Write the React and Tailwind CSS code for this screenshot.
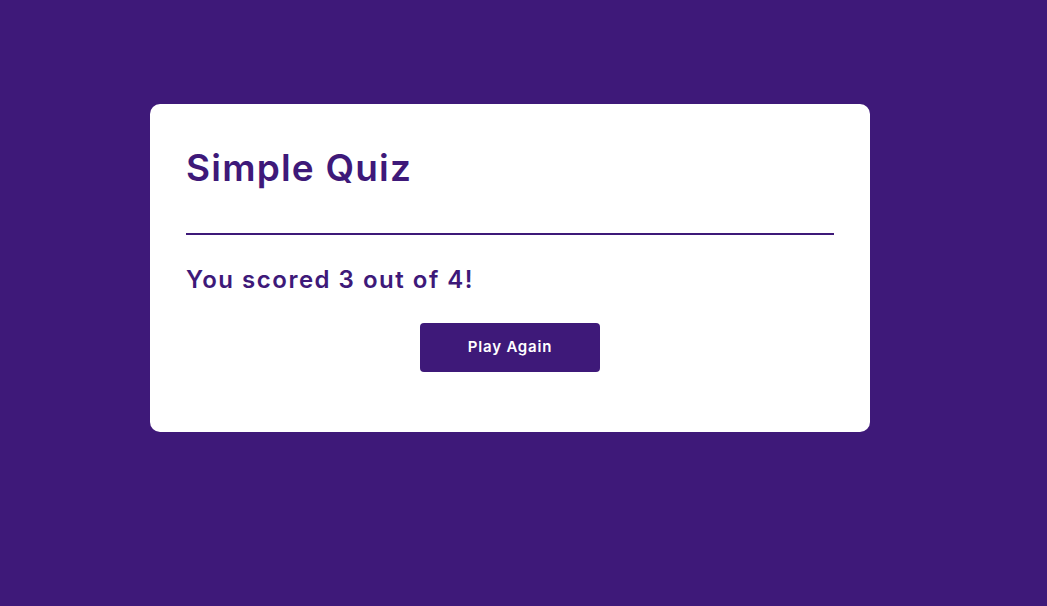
import React, { useState } from 'react';

const App = () => {
    const [score] = useState(3);
    const total = 4;

    return (
        <div className="min-h-screen w-full bg-[#3e1979] pt-[104px] font-['Inter',sans-serif]">
            <div className="ml-[150px] w-[720px] bg-white rounded-[10px] px-[36px] pt-[38px] pb-[60px]">
                <h1 className="text-[37px] leading-[52px] font-semibold tracking-[1.2px] text-[#3e1979]">Simple Quiz</h1>
                <hr className="mt-[39px] border-0 h-[2px] bg-[#3e1979]" />
                <h2 className="mt-[28px] text-[24px] leading-[34px] font-semibold tracking-[1.5px] text-[#3e1979]">
                    You scored {score} out of {total}!
                </h2>
                <div className="flex justify-center mt-[26px]">
                    <button className="w-[180px] h-[49px] rounded-[4px] bg-[#3e1979] text-white text-[15px] font-semibold tracking-[0.8px]">
                        Play Again
                    </button>
                </div>
            </div>
        </div>
    );
};

export default App;
